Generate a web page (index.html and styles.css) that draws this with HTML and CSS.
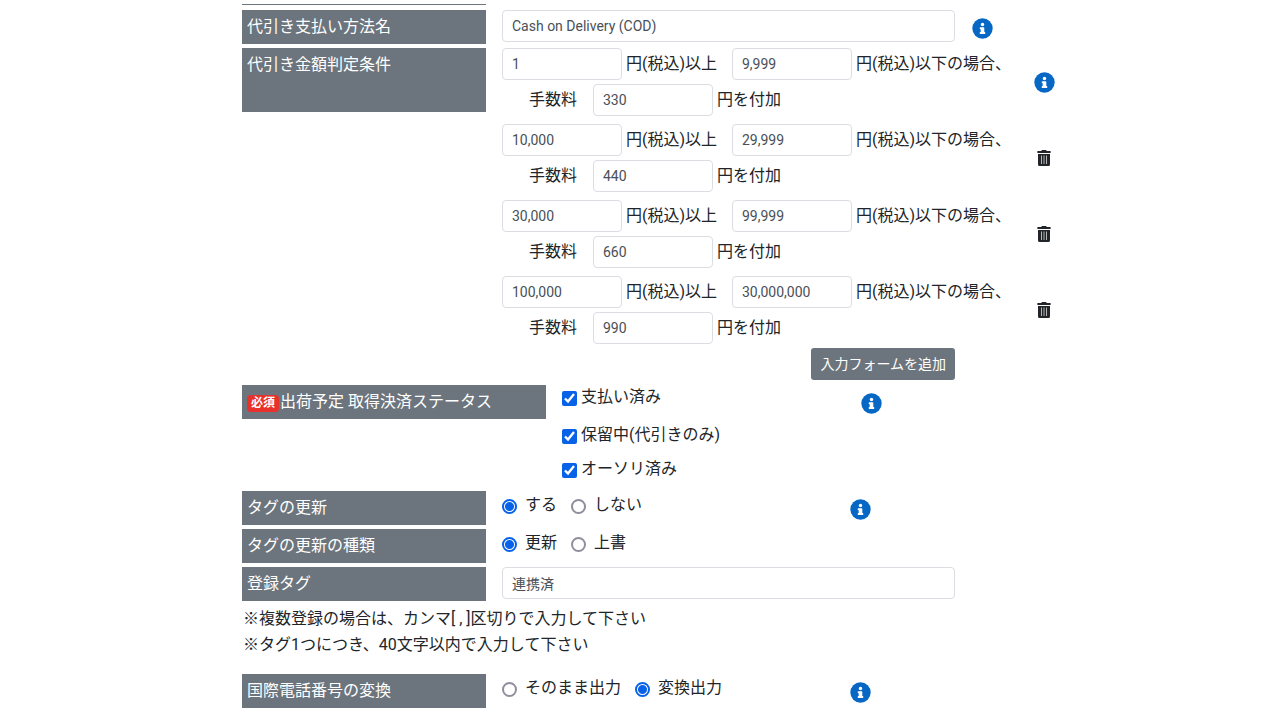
FILE: index.html
```html
<!DOCTYPE html>
<html lang="ja">
<head>
<meta charset="utf-8">
<title>代引き設定</title>
<link rel="stylesheet" href="styles.css">
</head>
<body>
<svg class="sprite" aria-hidden="true">
  <symbol id="info" viewBox="0 0 512 512"><circle cx="256" cy="256" r="248" fill="currentColor"/><circle cx="256" cy="160" r="42" fill="#fff"/><path fill="#fff" d="M204 224h84a12 12 0 0 1 12 12v108h12a12 12 0 0 1 12 12v24a12 12 0 0 1-12 12H200a12 12 0 0 1-12-12v-24a12 12 0 0 1 12-12h12v-72h-12a12 12 0 0 1-12-12v-24a12 12 0 0 1 12-12z"/></symbol>
  <symbol id="trash" viewBox="0 0 14 16"><path fill="currentColor" d="M.4 1h3.900l.6-1h4.200l.6 1h3.900v2H.4zM1 4h12v10.500q0 1.500-1.500 1.500h-9Q1 16 1 14.500z"/><path stroke="#b4b6b8" fill="none" d="M4.500 5.500v8.500M7 5.500v8.500M9.500 5.500v8.500"/></symbol>
</svg>
<main class="settings">
  <div class="previous-edge"></div>

  <div class="row">
    <label class="heading" for="method">代引き支払い方法名</label>
    <input class="text field-wide" id="method" type="text" value="Cash on Delivery (COD)">
    <button class="icon-button help" type="button" aria-label="支払い方法名の説明"><svg class="info"><use href="#info"/></svg></button>
  </div>

  <div class="row">
    <div class="heading heading-tall">代引き金額判定条件</div>
    <div class="conditions">
      <div class="condition">
        <div class="range">
          <input class="text" id="min1" type="text" value="1"><label class="unit-min" for="min1">円(税込)以上</label>
          <input class="text" id="max1" type="text" value="9,999"><label for="max1">円(税込)以下の場合、</label>
        </div>
        <div class="fee"><label class="fee-name" for="fee1">手数料</label><input class="text" id="fee1" type="text" value="330"><span>円を付加</span></div>
        <button class="icon-button condition-action" type="button" aria-label="判定条件の説明"><svg class="info"><use href="#info"/></svg></button>
      </div>
      <div class="condition">
        <div class="range">
          <input class="text" id="min2" type="text" value="10,000"><label class="unit-min" for="min2">円(税込)以上</label>
          <input class="text" id="max2" type="text" value="29,999"><label for="max2">円(税込)以下の場合、</label>
        </div>
        <div class="fee"><label class="fee-name" for="fee2">手数料</label><input class="text" id="fee2" type="text" value="440"><span>円を付加</span></div>
        <button class="icon-button condition-action" type="button" aria-label="削除"><svg class="trash"><use href="#trash"/></svg></button>
      </div>
      <div class="condition">
        <div class="range">
          <input class="text" id="min3" type="text" value="30,000"><label class="unit-min" for="min3">円(税込)以上</label>
          <input class="text" id="max3" type="text" value="99,999"><label for="max3">円(税込)以下の場合、</label>
        </div>
        <div class="fee"><label class="fee-name" for="fee3">手数料</label><input class="text" id="fee3" type="text" value="660"><span>円を付加</span></div>
        <button class="icon-button condition-action" type="button" aria-label="削除"><svg class="trash"><use href="#trash"/></svg></button>
      </div>
      <div class="condition">
        <div class="range">
          <input class="text" id="min4" type="text" value="100,000"><label class="unit-min" for="min4">円(税込)以上</label>
          <input class="text" id="max4" type="text" value="30,000,000"><label for="max4">円(税込)以下の場合、</label>
        </div>
        <div class="fee"><label class="fee-name" for="fee4">手数料</label><input class="text" id="fee4" type="text" value="990"><span>円を付加</span></div>
        <button class="icon-button condition-action" type="button" aria-label="削除"><svg class="trash"><use href="#trash"/></svg></button>
      </div>
      <div class="field-wide add-row"><button class="add" type="button">入力フォームを追加</button></div>
    </div>
  </div>

  <div class="row">
    <div class="heading heading-wide"><span class="required">必須</span>出荷予定 取得決済ステータス</div>
    <div class="checks">
      <label class="check"><input type="checkbox" checked>支払い済み</label>
      <label class="check"><input type="checkbox" checked>保留中(代引きのみ)</label>
      <label class="check"><input type="checkbox" checked>オーソリ済み</label>
    </div>
    <button class="icon-button help help-flush" type="button" aria-label="決済ステータスの説明"><svg class="info"><use href="#info"/></svg></button>
  </div>

  <div class="row">
    <div class="heading">タグの更新</div>
    <div class="radios">
      <label class="radio"><input type="radio" name="update" checked><span>する</span></label>
      <label class="radio"><input type="radio" name="update"><span>しない</span></label>
    </div>
    <button class="icon-button help help-flush" type="button" aria-label="タグの更新の説明"><svg class="info"><use href="#info"/></svg></button>
  </div>

  <div class="row">
    <div class="heading">タグの更新の種類</div>
    <div class="radios">
      <label class="radio"><input type="radio" name="kind" checked><span>更新</span></label>
      <label class="radio"><input type="radio" name="kind"><span>上書</span></label>
    </div>
  </div>

  <div class="row">
    <label class="heading" for="tag">登録タグ</label>
    <input class="text field-wide" id="tag" type="text" value="連携済">
  </div>

  <div class="notes">
    <p>※複数登録の場合は、カンマ[ , ]区切りで入力して下さい</p>
    <p>※タグ1つにつき、40文字以内で入力して下さい</p>
  </div>

  <div class="row">
    <div class="heading">国際電話番号の変換</div>
    <div class="radios">
      <label class="radio"><input type="radio" name="phone"><span>そのまま出力</span></label>
      <label class="radio"><input type="radio" name="phone" checked><span>変換出力</span></label>
    </div>
    <button class="icon-button help help-flush" type="button" aria-label="国際電話番号の変換の説明"><svg class="info"><use href="#info"/></svg></button>
  </div>
</main>
</body>
</html>
```
FILE: styles.css
```css
* {
  box-sizing: border-box;
}

body {
  display: grid;
  grid-template-columns: 242fr minmax(auto, 828px) 210fr;
  margin: 0;
  background: #fff;
  color: #212529;
  font-family: Roboto, "Noto Sans CJK JP", sans-serif;
  font-size: 16px;
  line-height: 24px;
}

.sprite {
  position: absolute;
  width: 0;
  height: 0;
}

.settings {
  grid-column: 2;
  display: flex;
  flex-direction: column;
  gap: 4px;
  padding: 4px 0 12px;
}

.previous-edge {
  width: 244px;
  height: 1px;
  margin-bottom: 1px;
  background: #6c757d;
}

.row {
  display: flex;
  align-items: flex-start;
}

.heading {
  flex: none;
  width: 244px;
  min-height: 34px;
  margin-right: 16px;
  padding: 5px;
  background: #6c757d;
  color: #fff;
}

.heading-tall {
  min-height: 64px;
}

.heading-wide {
  width: 304px;
}

.required {
  display: inline-block;
  margin-right: 1px;
  padding: 0 4px;
  border-radius: 4px;
  background: #e8302c;
  font-size: 12px;
  font-weight: 700;
  line-height: 17px;
}

.text {
  width: 120px;
  height: 32px;
  padding: 0 9px 1px;
  border: 1px solid #dadee2;
  border-radius: 4px;
  background: #fff;
  color: #495057;
  font: inherit;
  font-size: 14px;
}

.field-wide {
  width: 453px;
}

.icon-button {
  display: grid;
  place-items: center;
  padding: 0;
  border: 0;
  background: none;
  color: inherit;
}

.info {
  width: 21px;
  height: 21px;
  color: #0667c4;
}

.trash {
  width: 14px;
  height: 16px;
}

.help {
  margin: 8px 0 0 17px;
}

.help-flush {
  margin-left: 0;
}

.conditions {
  display: flex;
  flex-direction: column;
  gap: 8px;
}

.condition {
  display: grid;
  grid-template-columns: 530px 24px;
  row-gap: 4px;
}

.range,
.fee {
  grid-column: 1;
  display: flex;
  align-items: center;
  gap: 4px;
  white-space: nowrap;
}

.unit-min {
  width: 102px;
}

.fee {
  padding-left: 27px;
}

.fee-name {
  width: 60px;
}

.condition-action {
  grid-area: 1 / 2 / 3 / 3;
}

.add-row {
  display: flex;
  justify-content: flex-end;
  margin: -4px 0 1px;
}

.add {
  height: 32px;
  padding: 0 9px;
  border: 0;
  border-radius: 3px;
  background: #6c757d;
  color: #fff;
  font: inherit;
  font-size: 14px;
}

.checks {
  width: 299px;
}

.check {
  display: flex;
  align-items: center;
  gap: 4px;
  height: 24px;
  margin-bottom: 10px;
}

.check:first-child {
  margin-bottom: 14px;
}

.check:last-child {
  margin-bottom: 6px;
}

.check input,
.radio input {
  flex: none;
  width: 15px;
  height: 15px;
  margin: 3px 0 0;
  accent-color: #0762e8;
}

.radio input {
  appearance: none;
  border: 2px solid #8f8f9d;
  border-radius: 50%;
  background: #fff;
}

.radio input:checked {
  border-color: #0762e8;
  background: radial-gradient(circle, #0762e8 4px, #fff 5px);
}

.radios {
  display: flex;
  gap: 14px;
  width: 348px;
  padding-top: 2px;
}

.radio {
  display: flex;
  align-items: center;
  gap: 8px;
}

.notes {
  padding: 1px 1px 12px;
  line-height: 26px;
}

.notes p {
  margin: 0;
}
```
